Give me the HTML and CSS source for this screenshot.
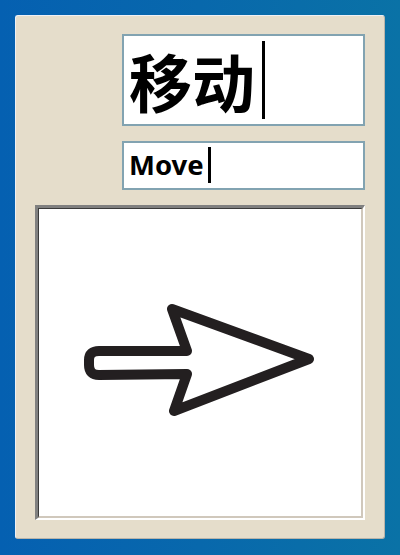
FILE: index.html
```html
<!DOCTYPE html>
<html>
<head>
<meta charset="utf-8">
<link rel="stylesheet" href="styles.css">
</head>
<body>
<div class="panel">
  <div class="field field-big"><span class="txt cjk">移动</span><span class="caret caret-big"></span></div>
  <div class="field field-small"><span class="txt latin">Move</span><span class="caret caret-small"></span></div>
  <div class="canvas">
    <svg class="arrow" width="322" height="307" viewBox="39 209 322 307">
      <path d="M188 352 L173 310 L310 360 L175 412 L188 375 L100 376 Q90 376 90 366 L90 361 Q90 352 100 352 Z" fill="none" stroke="#231f20" stroke-width="10" stroke-linejoin="round"/>
    </svg>
  </div>
</div>
</body>
</html>
```
FILE: styles.css
```css
html, body {
  margin: 0;
  padding: 0;
}
body {
  width: 400px;
  height: 555px;
  background: linear-gradient(90deg, #0560b1 0%, #0868ac 50%, #0a72a6 100%);
  overflow: hidden;
}
.panel {
  box-sizing: border-box;
  margin: 15px 0 0 15px;
  width: 370px;
  height: 524px;
  background: #e5ddcb;
  border-radius: 3px;
  border-top: 1px solid #eef0f6;
  border-left: 1px solid #eef0f6;
  border-right: 1px solid #b9b4aa;
  border-bottom: 1px solid #b9b4aa;
  padding: 18px 19px 18px 19px;
  display: flex;
  flex-direction: column;
  align-items: flex-end;
  gap: 15px;
}
.field {
  box-sizing: border-box;
  width: 243px;
  background: #ffffff;
  border: 2px solid #82a3b1;
  display: flex;
  align-items: flex-start;
}
.field-big {
  height: 92px;
  padding: 0 0 0 5px;
}
.field-small {
  height: 49px;
  padding: 0 0 0 5px;
}
.txt {
  color: #000;
  white-space: nowrap;
}
.cjk {
  font-family: "Noto Sans CJK SC", sans-serif;
  font-weight: 700;
  font-size: 63px;
  line-height: 63px;
  margin-top: 12px;
}
.latin {
  font-family: "Noto Sans", sans-serif;
  font-weight: 700;
  font-size: 27.5px;
  line-height: 30px;
  margin-top: 7px;
}
.caret {
  display: block;
  background: #000;
  width: 3px;
}
.caret-big {
  height: 78px;
  margin-top: 5px;
  margin-left: 7px;
}
.caret-small {
  height: 36px;
  margin-top: 4px;
  margin-left: 4px;
}
.canvas {
  box-sizing: border-box;
  width: 330px;
  height: 315px;
  background: #ffffff;
  border-style: solid;
  border-width: 3px 2px 2px 3px;
  border-color: #808080 #ffffff #ffffff #808080;
  position: relative;
}
.canvas::before {
  content: "";
  position: absolute;
  inset: 0;
  border-style: solid;
  border-width: 1px 2px 2px 1px;
  border-color: #3a3a3a #d0c8bc #d0c8bc #3a3a3a;
  pointer-events: none;
}
.arrow {
  display: block;
}
```
